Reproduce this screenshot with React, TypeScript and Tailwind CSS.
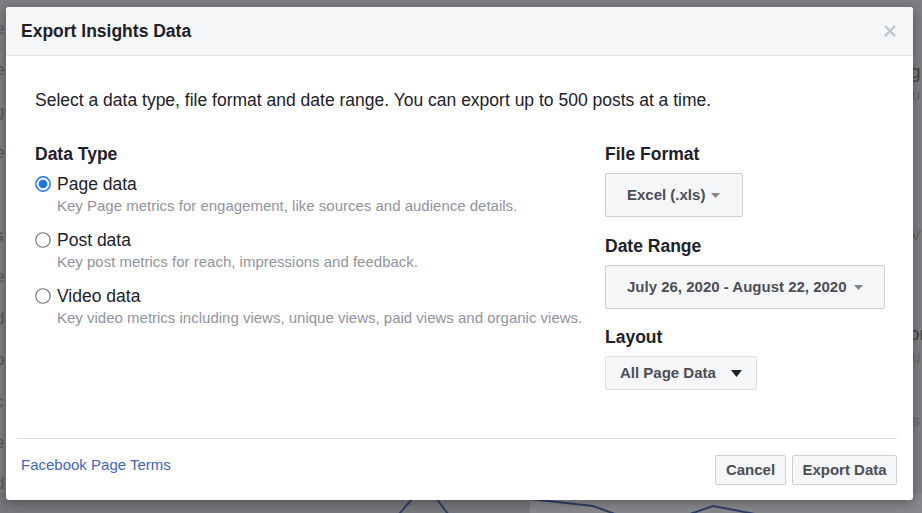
import React from "react";

const font = { fontFamily: '"Liberation Sans", Arial, Helvetica, sans-serif' };

function Radio({ checked }: { checked?: boolean }) {
  return (
    <svg width="16" height="16" viewBox="0 0 16 16" className="shrink-0">
      {checked ? (
        <>
          <circle cx="8" cy="8" r="7.2" fill="#fff" stroke="#1a73e8" strokeWidth="1.4" />
          <circle cx="8" cy="8" r="4.3" fill="#1a73e8" />
        </>
      ) : (
        <circle cx="8" cy="8" r="7.2" fill="#fff" stroke="#6b6f75" strokeWidth="1.1" />
      )}
    </svg>
  );
}

function Caret({ big }: { big?: boolean }) {
  return big ? (
    <svg width="11" height="7" viewBox="0 0 11 7" className="shrink-0">
      <path d="M0 0h11L5.5 7z" fill="#1d2129" />
    </svg>
  ) : (
    <svg width="9" height="5" viewBox="0 0 9 5" className="shrink-0">
      <path d="M0 0h9L4.5 5z" fill="#7f858d" />
    </svg>
  );
}

const options = [
  { label: "Page data", desc: "Key Page metrics for engagement, like sources and audience details.", checked: true },
  { label: "Post data", desc: "Key post metrics for reach, impressions and feedback." },
  { label: "Video data", desc: "Key video metrics including views, unique views, paid views and organic views." },
];

export default function App() {
  return (
    <div className="relative h-[513px] w-[922px] overflow-hidden bg-[#7e7f82]" style={font}>
      {/* dimmed page behind the overlay */}
      <div className="pointer-events-none absolute bottom-0 left-0 h-[20px] w-[530px] bg-[#76777b]" />
      <div className="pointer-events-none absolute bottom-0 left-[530px] h-[20px] w-[392px] bg-[#86878a]" />
      <svg className="pointer-events-none absolute bottom-0 left-0" width="922" height="20" viewBox="0 0 922 20">
        <g fill="none" stroke="#2e3d68" strokeWidth="2">
          <path d="M399 21L413 5" />
          <path d="M436 5L448 21" />
          <path d="M530 6L593 13L615 21" />
          <path d="M690 21L713 13L755 21" />
        </g>
      </svg>
      <div className="pointer-events-none absolute left-[-5px] top-0 flex h-full flex-col justify-around py-2 text-[17px] text-[#55575b]">
        <span>e</span><span>e</span><span>g</span><span>e</span><span>t</span><span>s</span><span>e</span><span>d</span><span>o</span><span>c</span><span>e</span><span>d</span>
      </div>
      <div className="pointer-events-none absolute left-[910px] top-[58px] text-[19px] text-[#444]">g</div>
      <div className="pointer-events-none absolute left-[912px] top-[84px] text-[15px] text-[#666]">u</div>
      <div className="pointer-events-none absolute left-[911px] top-[224px] text-[15px] text-[#666]">V</div>
      <div className="pointer-events-none absolute left-[909px] top-[320px] text-[19px] text-[#444]">or</div>
      <div className="pointer-events-none absolute left-[912px] top-[346px] text-[15px] text-[#666]">u</div>
      <div className="pointer-events-none absolute left-[912px] top-[410px] text-[15px] text-[#666]">s</div>

      <div className="relative pl-[6px] pt-[7px]">
        <div className="flex h-[493px] w-[907px] flex-col overflow-hidden rounded-[3px] bg-white shadow-[0_2px_12px_rgba(0,0,0,0.35)]">
          {/* header */}
          <div className="flex h-[49px] shrink-0 items-center justify-between border-b border-[#e5e5e5] bg-[#f5f6f7] pl-[15px] pr-[17px]">
            <span className="text-[17.5px] font-bold text-[#1d2129]">Export Insights Data</span>
            <svg width="12" height="12" viewBox="0 0 12 12">
              <path d="M1 1l10 10M11 1L1 11" stroke="#bec3c9" strokeWidth="2.4" />
            </svg>
          </div>

          {/* body */}
          <div className="flex-1 pl-[29px] pr-[28px]">
            <p className="mt-[33px] text-[17.5px] leading-[22px] text-[#1d2129]">
              Select a data type, file format and date range. You can export up to 500 posts at a time.
            </p>
            <div className="mt-[32px] flex">
              <div className="flex-1">
                <div className="text-[17.5px] font-bold leading-[22px] text-[#1d2129]">Data Type</div>
                <div className="mt-[8px] flex flex-col gap-[14px]">
                  {options.map((o) => (
                    <div key={o.label}>
                      <div className="flex items-center gap-[6px]">
                        <Radio checked={o.checked} />
                        <span className="text-[17.5px] leading-[22px] text-[#1d2129]">{o.label}</span>
                      </div>
                      <div className="mt-[2px] pl-[22px] text-[15px] leading-[18px] text-[#90949c]">{o.desc}</div>
                    </div>
                  ))}
                </div>
              </div>

              <div className="w-[280px]">
                <div className="text-[17.5px] font-bold leading-[22px] text-[#1d2129]">File Format</div>
                <div className="mt-[8px] flex h-[44px] w-[138px] items-center gap-[6px] rounded-[2px] border border-[#ccd0d5] bg-[#f5f6f7] pl-[21px] text-[15px] font-bold text-[#4b4f56]">
                  Excel (.xls) <Caret />
                </div>
                <div className="mt-[18px] text-[17.5px] font-bold leading-[22px] text-[#1d2129]">Date Range</div>
                <div className="mt-[8px] flex h-[44px] w-[280px] items-center gap-[7px] rounded-[2px] border border-[#ccd0d5] bg-[#f5f6f7] pl-[21px] text-[15px] font-bold text-[#4b4f56]">
                  July 26, 2020 - August 22, 2020 <Caret />
                </div>
                <div className="mt-[17px] text-[17.5px] font-bold leading-[22px] text-[#1d2129]">Layout</div>
                <div className="mt-[8px] flex h-[34px] w-[152px] items-center gap-[15px] rounded-[2px] border border-[#dddfe2] bg-[#f5f6f7] pl-[14px] text-[15px] font-bold text-[#4b4f56]">
                  All Page Data <Caret big />
                </div>
              </div>
            </div>
          </div>

          {/* footer */}
          <div className="ml-[11px] mr-[16px] h-px shrink-0 bg-[#dddfe2]" />
          <div className="flex h-[61px] shrink-0 items-start justify-between pl-[15px] pr-[16px] pt-[16px]">
            <a className="text-[15px] leading-[20px] text-[#4267b2]">Facebook Page Terms</a>
            <div className="flex gap-[6px]">
              <button className="h-[30px] w-[71px] rounded-[2px] border border-[#ccd0d5] bg-[#f5f6f7] text-[15px] font-bold text-[#4b4f56]">
                Cancel
              </button>
              <button className="h-[30px] w-[105px] rounded-[2px] border border-[#ccd0d5] bg-[#f5f6f7] text-[15px] font-bold text-[#4b4f56]">
                Export Data
              </button>
            </div>
          </div>
        </div>
      </div>
    </div>
  );
}
